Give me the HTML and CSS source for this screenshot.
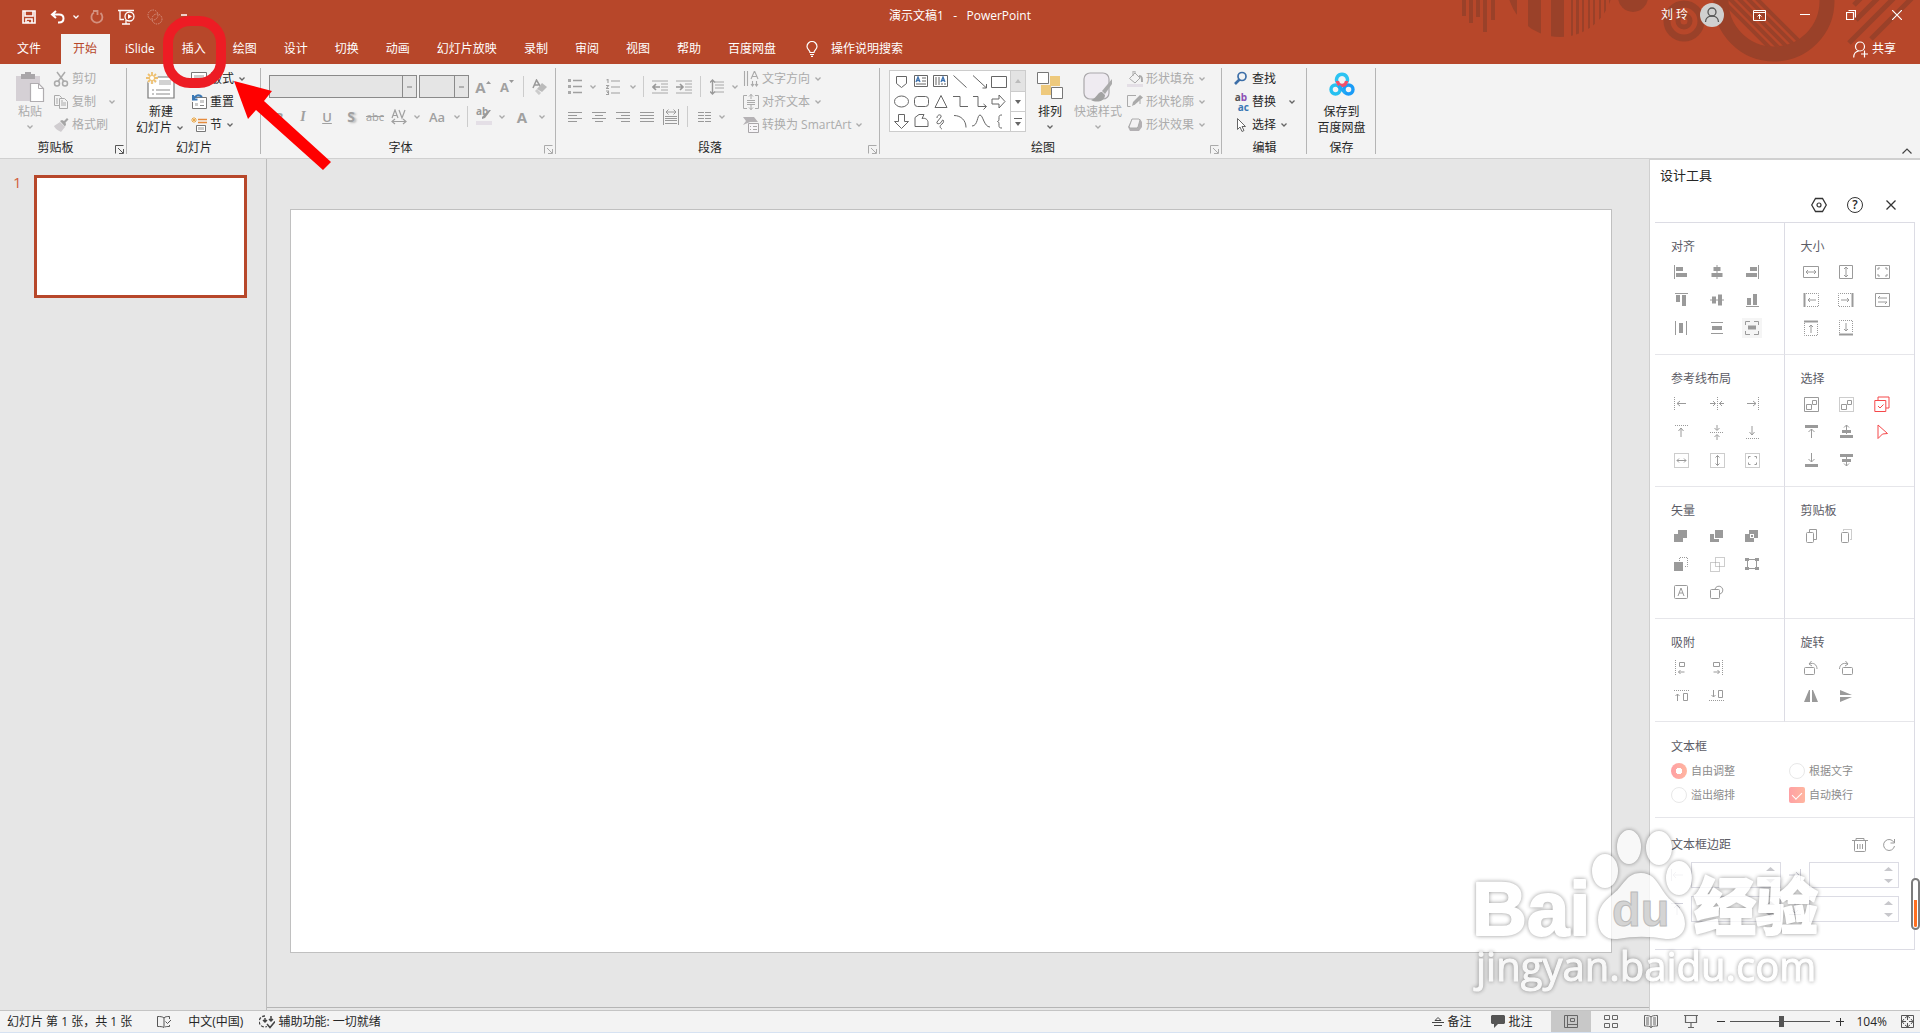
FILE: index.html
```html
<!DOCTYPE html>
<html lang="zh-CN">
<head>
<meta charset="utf-8">
<title>演示文稿1 - PowerPoint</title>
<link rel="stylesheet" href="styles.css">
</head>
<body>
<svg class="sprite" aria-hidden="true">
  <symbol id="chev" viewBox="0 0 8 8"><path d="M1.5 2.5 4 5l2.500-2.500" fill="none" stroke="currentColor" stroke-width="1.300"/></symbol>
  <symbol id="launch" viewBox="0 0 9 9"><path d="M.5 8.500V.5H8.500M3 3l5 5M8.500 4v4.500H4" fill="none" stroke="currentColor"/></symbol>
</svg>

<header class="header">
  <svg class="deco" viewBox="0 0 460 64" aria-hidden="true">
    <defs>
      <clipPath id="c1"><circle cx="100" cy="-16" r="53"/></clipPath>
      <clipPath id="c2"><circle cx="314" cy="1" r="46"/></clipPath>
    </defs>
    <g fill="#9a4129">
      <path d="M2 0h4v16H2zM9 0h4v23H9zM16 0h4v17h-4zM23 0h4v32h-4zM31 0h4v20h-4z"/>
      <path clip-path="url(#c1)" d="M45 0h12v40H45zM68 0h13v40H68zM91 0h13v40H91zM111 0h2v40h-2zM116 0h3v40h-3zM122 0h2v40h-2zM128 0h2v40h-2zM133 0h2v40h-2zM139 0h2v40h-2zM144 0h2v40h-2zM149 0h2v40h-2z"/>
      <circle cx="173" cy="-3" r="15"/>
    </g>
    <g fill="none" stroke="#9a4129">
      <circle cx="224" cy="21" r="17" stroke-width="7"/><circle cx="224" cy="21" r="6" stroke-width="5"/>
      <circle cx="314" cy="1" r="53" stroke-width="15"/>
      <path clip-path="url(#c2)" stroke-width="4" d="M288 -10l70 70M279 -10l70 70M270 -10l70 70M261 -10l70 70M252 -10l70 70"/>
      <path stroke-width="5" d="M394 5l10-10M396 20l25-25M389 43l48-48M411 39l44-44"/>
    </g>
  </svg>
  <div class="titlebar">
    <div class="quick">
      <button aria-label="保存"><svg width="14" height="14" viewBox="0 0 14 14"><path d="M1 1h12v12H1zM3 1v5h8V1M4 13V9h6v4M6 13v-2" fill="none" stroke="#fff" stroke-width="1.600"/></svg></button>
      <button aria-label="撤消"><svg width="16" height="14" viewBox="0 0 16 14"><path d="M6 1 2 4.500 6 8M2 4.500h7c3 0 4.500 1.800 4.500 4S12 12.500 9 12.500H8" fill="none" stroke="#fff" stroke-width="2"/></svg></button>
      <svg class="cv light" width="12" height="8"><use href="#chev"/></svg>
      <button aria-label="恢复" class="dim"><svg width="14" height="14" viewBox="0 0 14 14"><path d="M4 2.500A5.500 5.500 0 1 0 10.500 3M3 1h4.500v4" fill="none" stroke="#fff" stroke-width="1.800"/></svg></button>
      <button aria-label="从头开始" class="near"><svg width="18" height="16" viewBox="0 0 18 16"><path d="M0 1.500h16M2 2v8.500h4M4 15h8M8 11v4" fill="none" stroke="#fff" stroke-width="1.300"/><circle cx="11.500" cy="7.500" r="4.500" fill="#b7472a" stroke="#fff" stroke-width="1.300"/><path d="M10 5l4 2.500-4 2.500z" fill="#fff"/></svg></button>
      <button aria-label="iSlide" class="dim"><svg width="16" height="16" viewBox="0 0 16 16"><circle cx="6" cy="6" r="5" fill="none" stroke="#fff" stroke-dasharray="1.500 1"/><circle cx="10" cy="10" r="5" fill="none" stroke="#fff" stroke-dasharray="1.500 1"/></svg></button>
      <button aria-label="自定义"><svg width="6" height="6" viewBox="0 0 6 6"><path d="M0 1h6" stroke="#fff" stroke-width="1.500"/></svg></button>
    </div>
    <h1 class="doc-title">演示文稿1&nbsp;&nbsp; -&nbsp;&nbsp; PowerPoint</h1>
    <div class="account">
      <span>刘 玲</span>
      <svg class="avatar" width="24" height="24" viewBox="0 0 24 24"><circle cx="12" cy="12" r="12" fill="#d0d0d0"/><circle cx="12" cy="9" r="4" fill="none" stroke="#555" stroke-width="1.300"/><path d="M5.500 19c0-8 13-8 13 0" fill="none" stroke="#555" stroke-width="1.300"/></svg>
      <button class="win" aria-label="功能区显示选项"><svg width="13" height="11" viewBox="0 0 13 11"><path d="M.5.5h12v10H.5zM.5 2.500h12M6.500 9V4.500M4.500 6.500l2-2 2 2" fill="none" stroke="#fff"/></svg></button>
      <button class="win" aria-label="最小化"><svg width="10" height="10" viewBox="0 0 10 10"><path d="M0 4.500h10" stroke="#fff"/></svg></button>
      <button class="win" aria-label="还原"><svg width="10" height="10" viewBox="0 0 10 10"><path d="M.5 2.500h7v7h-7zM2.500.5h7v7" fill="none" stroke="#fff" stroke-width="1.200"/></svg></button>
      <button class="win" aria-label="关闭"><svg width="10" height="10" viewBox="0 0 10 10"><path d="M0 0l10 10M10 0 0 10" stroke="#fff" stroke-width="1.200"/></svg></button>
    </div>
  </div>
  <nav class="tabs">
    <a href="#" class="file">文件</a><a href="#" class="active">开始</a><a href="#">iSlide</a><a href="#">插入</a><a href="#">绘图</a><a href="#">设计</a><a href="#">切换</a><a href="#">动画</a><a href="#">幻灯片放映</a><a href="#">录制</a><a href="#">审阅</a><a href="#">视图</a><a href="#">帮助</a><a href="#">百度网盘</a>
    <button class="tell"><svg width="12" height="16" viewBox="0 0 12 16"><path d="M4 11.500C4 9 1 8.500 1 5.500a5 5 0 0 1 10 0c0 3-3 3.500-3 6zM4 13.500h4M5 15.300h2" fill="none" stroke="#fff" stroke-width="1.200"/></svg>操作说明搜索</button>
    <button class="share"><svg width="15" height="17" viewBox="0 0 15 17"><circle cx="7" cy="5.500" r="4.500" fill="none" stroke="#fff" stroke-width="1.200"/><path d="M.7 16.500c0-4 2-6 5-6.500M8 13h7M11.500 9.500v7" fill="none" stroke="#fff" stroke-width="1.200"/></svg>共享</button>
  </nav>
</header>

<section class="ribbon">
  <div class="group g-clip">
    <div class="body">
      <button class="big off"><svg width="30" height="30" viewBox="0 0 30 30"><path d="M1 4h24v25H1z" fill="#d5d0d5"/><path d="M6 2h4V0h6v2h4v5H6z" fill="#a9a6a9"/><path d="M15.500 11.500h8l5 5v13h-13z" fill="#fff" stroke="#b0adb0" stroke-width="1.200"/><path d="M23.500 11.500v5h5" fill="none" stroke="#b0adb0"/></svg><span>粘贴</span><svg class="cv" width="8" height="8"><use href="#chev"/></svg></button>
      <div class="small off">
        <button><svg width="16" height="16" viewBox="0 0 16 16"><g fill="none" stroke="#aaa" stroke-width="1.500"><circle cx="4" cy="12.500" r="2.500"/><circle cx="12" cy="12.500" r="2.500"/><path d="M4 1l7 9.500M12 1 5 10.500"/></g></svg>剪切</button>
        <button><svg width="16" height="16" viewBox="0 0 16 16"><g fill="#f3f3f3" stroke="#aaa"><path d="M1.500 1.500h5l2 2v8h-7z"/><path d="M6.500 4.500h5l3 3v7h-8z"/><path d="M3 5h2M3 7h2M3 9h2M8 9h5M8 11h5M8 7h2"/></g></svg>复制<svg class="cv far" width="12" height="8"><use href="#chev"/></svg></button>
        <button><svg width="16" height="16" viewBox="0 0 16 16"><path d="M1 9l6-4 5 5-4 5c-2-1-6-3-7-6z" fill="#d0cdd0"/><path d="M7 4l2-1 2 1 3-3 1.500 1.500-3 3 .5 2-1 2z" fill="#a5a5a5"/></svg>格式刷</button>
      </div>
    </div>
    <div class="cap"><span>剪贴板</span><svg class="launch dark" width="9" height="9"><use href="#launch"/></svg></div>
  </div>

  <div class="group g-slide">
    <div class="body">
      <button class="big"><svg width="30" height="30" viewBox="0 0 30 30"><path d="M2 5h26v21H2z" fill="#fff" stroke="#7a7a7a" stroke-width="1.200"/><path d="M13 8h12v5H13z" fill="#d2d2d2"/><path d="M6 18h2m2 0h14M6 22h2m2 0h14" stroke="#8a8a8a"/><circle cx="6" cy="6" r="6" fill="#f3f3f3"/><path d="M6 0v12M0 6h12M2 2l8 8M10 2l-8 8" stroke="#eec070" stroke-width="1.800"/><circle cx="6" cy="6" r="2" fill="#fff"/></svg><span>新建</span><span class="line">幻灯片<svg class="cv" width="12" height="8"><use href="#chev"/></svg></span></button>
      <div class="small">
        <button><svg width="16" height="16" viewBox="0 0 16 16"><path d="M.5 1.500h15v13H.5z" fill="#fff" stroke="#777"/><path d="M3 4h10v3H3zM3 9h4v3H3z" fill="#ccc"/><path d="M9 9.500h4M9 11.500h4" stroke="#888"/></svg>版式<svg class="cv" width="12" height="8"><use href="#chev"/></svg></button>
        <button><svg width="16" height="16" viewBox="0 0 16 16"><path d="M4 3.500h11.500v11H1.500V8" fill="#fff" stroke="#777"/><path d="M9 6h4v3H9zM4 9h3v3H4z" fill="#ccc"/><path d="M9 11.500h4" stroke="#888"/><path d="M2 1v4.500h4.500M2.500 5C4 1.500 8 0 11 3" fill="none" stroke="#3a78b5" stroke-width="2"/></svg>重置</button>
        <button><svg width="16" height="16" viewBox="0 0 16 16"><path d="M7 2.500h9M7 5.500h9" stroke="#e58a3c" stroke-width="1.500"/><path d="M5.500 8.500h9v6h-9z" fill="#fff" stroke="#777"/><path d="M7 10h6v3H7z" fill="#ccc"/><path d="M3 0v6M0 3h6M1 1l4 4M5 1 1 5" stroke="#eba94b"/></svg>节<svg class="cv" width="12" height="8"><use href="#chev"/></svg></button>
      </div>
    </div>
    <div class="cap"><span>幻灯片</span></div>
  </div>

  <div class="group g-font">
    <div class="body rows">
      <div class="row">
        <div class="combo wide"><input aria-label="字体" disabled><i></i></div><div class="combo"><input aria-label="字号" disabled><i></i></div>
        <button class="ic"><b class="glyph big-a">A</b><svg width="5" height="12" viewBox="0 0 5 12"><path d="M0 3l2.500-3L5 3z" fill="#999"/></svg></button>
        <button class="ic"><b class="glyph">A</b><svg width="5" height="14" viewBox="0 0 5 14"><path d="M0 0l2.500 3L5 0z" fill="#999"/></svg></button>
        <i class="sep"></i>
        <button class="ic" aria-label="清除格式"><svg width="16" height="16" viewBox="0 0 16 16"><path d="M1 9 4.500 1 8 7M2.500 6h4" fill="none" stroke="#999" stroke-width="1.500"/><path d="M10 4l5 4-5 5-5-3z" fill="#bbb"/><path d="M4 11l4 4" stroke="#ccc" stroke-width="3"/></svg></button>
      </div>
      <div class="row">
        <button class="ic glyph"><b>B</b></button><button class="ic glyph serif"><i>I</i></button><button class="ic glyph under"><u>U</u></button><button class="ic glyph shadow">S</button><button class="ic glyph strike">abc</button>
        <button class="ic" aria-label="字符间距"><svg width="16" height="16" viewBox="0 0 16 16"><path d="M1 9l3-8 3 8M2 6.500h4M8 1l3 8 3-8M1 12.500h14M4 10l-3 2.500L4 15M12 10l3 2.500-3 2.500" fill="none" stroke="#a0a0a0" stroke-width="1.200"/></svg></button><svg class="cv" width="12" height="8"><use href="#chev"/></svg>
        <button class="ic mid glyph light-a">Aa</button><svg class="cv" width="12" height="8"><use href="#chev"/></svg>
        <i class="sep"></i>
        <button class="ic hl"><span>ab</span><svg width="16" height="16" viewBox="0 0 16 16"><path d="M15 1l-6 8-3 1v-2l7-7z" fill="#999"/><path d="M0 12h16v4H0z" fill="#e4dfe6"/></svg></button><svg class="cv" width="12" height="8"><use href="#chev"/></svg>
        <button class="ic glyph mid big-a"><b>A</b></button><svg class="cv" width="12" height="8"><use href="#chev"/></svg>
      </div>
    </div>
    <div class="cap"><span>字体</span><svg class="launch" width="9" height="9"><use href="#launch"/></svg></div>
  </div>

  <div class="group g-para">
    <div class="body">
      <div class="rows">
        <div class="row">
          <button class="ic" aria-label="项目符号"><svg width="14" height="15" viewBox="0 0 14 15"><path d="M5 1.500h9M5 7.500h9M5 13.500h9" stroke="#a0a0a0" stroke-width="1.300"/><path d="M0 0h3v3H0zM0 6h3v3H0zM0 12h3v3H0z" fill="#aaa"/></svg></button><svg class="cv" width="12" height="8"><use href="#chev"/></svg>
          <button class="ic mid" aria-label="编号"><svg width="14" height="16" viewBox="0 0 14 16"><path d="M5 2h9M5 8h9M5 14h9M.5 1 2 .5V4M0 6.500h2.500L.5 9.500H3M0 12h2.500v1.500H1h1.500V15.500H0" fill="none" stroke="#a0a0a0" stroke-width="1.100"/></svg></button><svg class="cv" width="12" height="8"><use href="#chev"/></svg>
          <i class="sep"></i>
          <button class="ic" aria-label="降低列表级别"><svg width="16" height="14" viewBox="0 0 16 14"><path d="M0 1h16M9 4h7M9 7h7M9 10h7M0 13h16" stroke="#a8a8a8"/><path d="M1 7h7M4 4 1 7l3 3" fill="none" stroke="#999" stroke-width="1.600"/></svg></button>
          <button class="ic" aria-label="提高列表级别"><svg width="16" height="14" viewBox="0 0 16 14"><path d="M0 1h16M9 4h7M9 7h7M9 10h7M0 13h16" stroke="#a8a8a8"/><path d="M0 7h7M4 4l3 3-3 3" fill="none" stroke="#999" stroke-width="1.600"/></svg></button>
          <i class="sep"></i>
          <button class="ic" aria-label="行距"><svg width="14" height="16" viewBox="0 0 14 16"><path d="M5 3h9M5 6h9M5 9h9M5 13h9" stroke="#a8a8a8"/><path d="M2.500 1v14M0 3.500 2.500 1 5 3.500M0 12.500 2.500 15 5 12.500" fill="none" stroke="#999" stroke-width="1.400"/></svg></button><svg class="cv" width="12" height="8"><use href="#chev"/></svg>
        </div>
        <div class="row">
          <button class="ic" aria-label="左对齐"><svg width="14" height="12" viewBox="0 0 14 12"><path d="M0 1.500h14M0 4.500h9M0 7.500h14M0 10.500h9" stroke="#999"/></svg></button>
          <button class="ic" aria-label="居中"><svg width="14" height="12" viewBox="0 0 14 12"><path d="M0 1.500h14M3 4.500h8M0 7.500h14M3 10.500h8" stroke="#999"/></svg></button>
          <button class="ic" aria-label="右对齐"><svg width="14" height="12" viewBox="0 0 14 12"><path d="M0 1.500h14M5 4.500h9M0 7.500h14M5 10.500h9" stroke="#999"/></svg></button>
          <button class="ic" aria-label="两端对齐"><svg width="14" height="12" viewBox="0 0 14 12"><path d="M0 1.500h14M0 4.500h14M0 7.500h14M0 10.500h14" stroke="#999"/></svg></button>
          <button class="ic" aria-label="分散对齐"><svg width="16" height="16" viewBox="0 0 16 16"><path d="M.5 0v16M15.500 0v16M2 7.500h12M2 9.500h12M2 11.500h12M2 14.500h12M3 3h10M5.500.500 3 3l2.500 2.500M10.500.5 13 3l-2.500 2.500" fill="none" stroke="#999"/></svg></button>
          <i class="sep"></i>
          <button class="ic" aria-label="分栏"><svg width="13" height="12" viewBox="0 0 13 12"><path d="M0 1.500h6m1 0h6M0 4.500h6m1 0h6M0 7.500h6m1 0h6M0 10.500h6m1 0h6" stroke="#999"/></svg></button><svg class="cv" width="12" height="8"><use href="#chev"/></svg>
        </div>
      </div>
      <div class="small off">
        <button><svg width="16" height="16" viewBox="0 0 16 16"><path d="M1.500 0v15M4.500 0v15M9.500 10v5M13.500 10v5M8 13l1.500 2 1.500-2M12 13l1.500 2 1.500-2M8 8l3.500-8L15 8M9 5.500h5" fill="none" stroke="#aaa" stroke-width="1.100"/></svg>文字方向<svg class="cv" width="12" height="8"><use href="#chev"/></svg></button>
        <button><svg width="16" height="16" viewBox="0 0 16 16"><path d="M4 1.500H.5v13H4M12 1.500h3.500v13H12M4 6.500h8M4 8.500h8M8 0v5M6 2.500 8 .5l2 2M8 11v5M6 13.500l2 2 2-2M4 10.500h8" fill="none" stroke="#aaa"/></svg>对齐文本<svg class="cv" width="12" height="8"><use href="#chev"/></svg></button>
        <button><svg width="16" height="16" viewBox="0 0 16 16"><path d="M0 0h11l4 5H7L0 8l3-4z" fill="#b5b2b5"/><path d="M5.500 6.500h10v9h-10z" fill="#f7f5f8" stroke="#a9a6a9"/><path d="M7 9.500h1m2 0h4M7 12.500h1m2 0h4" stroke="#aaa"/></svg>转换为 SmartArt<svg class="cv" width="12" height="8"><use href="#chev"/></svg></button>
      </div>
    </div>
    <div class="cap"><span>段落</span><svg class="launch" width="9" height="9"><use href="#launch"/></svg></div>
  </div>

  <div class="group g-draw">
    <div class="body">
      <div class="gallery">
        <svg class="shapes" width="120" height="60" viewBox="0 0 118 60" fill="none" stroke="#666">
          <path d="M5.500 5.500h10v7l-5 4-5-4z"/>
          <path d="M23.500 4.500h13v11h-13zM42.500 4.500h14v11h-14zM31 7h4M31 10h4M25 13h10M45 6v8M48 6v8M51 12v2M54 12v2"/><path d="M25 11l2-5 2 5M26 9.500h2M50 11l2-5 2 5M51 9.500h2" stroke="#3f73b0" stroke-width="1.300"/>
          <path d="M62.500 4.500 75.500 16.500M82 4.500l13 12M95.500 13v4h-4M100.500 5.500h15v11h-15z"/>
          <ellipse cx="10.500" cy="30.500" rx="7" ry="5.500"/><rect x="23.500" y="25.500" width="14" height="10" rx="3"/><path d="M50 24.500 56 36.500H44zM62 25.500h7v10h8M82 25.500h5v10h8M92.500 33l3 2.500-3 3M101 28h7v-4l6 6.500-6 6.500v-4h-7z"/>
          <path d="M7.500 43.500h6v7h4l-7 7-7-7h4zM24 55.500v-9l4-3h5l-2 4c3-1 6 1 6 4v4zM46 47c0-4 5-4 4-1l-4 5c-1 3 4 2 5-1s3 1 0 3-2 4 0 5M63 44.500c7 0 12 5 12 12M81 55c6 0 5-11 8-11s4 12 10 12M111 44c-3 0-3 1-3 3s0 3-1.500 3.500c1.500.500 1.500 1.500 1.500 3.500s0 3 3 3"/>
        </svg>
        <div class="gscroll"><button class="dis" aria-label="上一行"><svg width="6" height="4"><path d="M0 4l3-4 3 4z" fill="#bbb"/></svg></button><button aria-label="下一行"><svg width="6" height="4"><path d="M0 0l3 4 3-4z" fill="#666"/></svg></button><button aria-label="其他"><svg width="8" height="8"><path d="M0 .5h8" stroke="#666"/><path d="M1 4l3 4 3-4z" fill="#666"/></svg></button></div>
      </div>
      <button class="big w40"><svg width="26" height="30" viewBox="0 0 26 30"><path d="M13 4h10v10H13zM4 13h10v10H4z" fill="#eec97c"/><path d="M.5.5h11v11H.5zM14.500 15.500h11v11h-11z" fill="#fff" stroke="#777"/></svg><span>排列</span><svg class="cv" width="8" height="8"><use href="#chev"/></svg></button>
      <button class="big w50 off"><svg width="30" height="30" viewBox="0 0 30 30"><rect x="1" y="1" width="25" height="26" rx="6" fill="#efebf1" stroke="#aaa8ab" stroke-width="1.200"/><path d="M29 7 19 19l3 3 7-10z" fill="#aaa"/><path d="M19 20c-4-1-4 5-11 8 5 3 14 2 14-5z" fill="#a3a3a3"/></svg><span>快速样式</span><svg class="cv" width="8" height="8"><use href="#chev"/></svg></button>
      <div class="small off">
        <button><svg width="16" height="16" viewBox="0 0 16 16"><path d="M0 13h16v3H0z" fill="#e4dfe6"/><path d="M2.500 7.500 8 2l5 5-5 5zM6 5V0h2v3" fill="#f3f3f3" stroke="#aaa"/><path d="M12 5c3 0 3 2 3 6" fill="none" stroke="#aaa" stroke-width="2"/></svg>形状填充<svg class="cv" width="12" height="8"><use href="#chev"/></svg></button>
        <button><svg width="16" height="16" viewBox="0 0 16 16"><path d="M9 1.500H.5v11h3M13 6v4" fill="none" stroke="#aaa"/><path d="M5 12l1-4 7-7 3 2.500-8 7z" fill="#aaa"/></svg>形状轮廓<svg class="cv" width="12" height="8"><use href="#chev"/></svg></button>
        <button><svg width="16" height="16" viewBox="0 0 16 16"><path d="M1 10l4-8h8l2 3v5l-3 4H3z" fill="#b3b0b3"/><path d="M5 2h7l1 1-2 7-1 1H3l-1-1z" fill="#f4f2f4" stroke="#aaa"/></svg>形状效果<svg class="cv" width="12" height="8"><use href="#chev"/></svg></button>
      </div>
    </div>
    <div class="cap"><span>绘图</span><svg class="launch" width="9" height="9"><use href="#launch"/></svg></div>
  </div>

  <div class="group g-edit">
    <div class="body">
      <div class="small">
        <button><svg width="16" height="16" viewBox="0 0 16 16"><circle cx="9" cy="5.500" r="4" fill="none" stroke="#3d6fa8" stroke-width="1.700"/><path d="M6.500 8.500 2 13" stroke="#3d6fa8" stroke-width="2.600"/></svg>查找</button>
        <button><span class="abac"><span>a<em>b</em></span><span class="to">ac</span></span>替换<svg class="cv far" width="12" height="8"><use href="#chev"/></svg></button>
        <button><svg width="16" height="16" viewBox="0 0 16 16"><path d="M4.500 1.500v11L7 10l2 4.500 2-1L9 9.500h3.500z" fill="#fff" stroke="#666"/></svg>选择<svg class="cv" width="12" height="8"><use href="#chev"/></svg></button>
      </div>
    </div>
    <div class="cap"><span>编辑</span></div>
  </div>

  <div class="group g-save">
    <div class="body">
      <button class="big"><svg width="26" height="30" viewBox="0 0 26 30"><g fill="none" stroke-width="3.400"><path d="M8 10a5.500 5.500 0 1 1 10 0" stroke="#2cc3f2"/><circle cx="6.500" cy="17.500" r="4.500" stroke="#25c0f0"/><circle cx="19.500" cy="17.500" r="4.500" stroke="#1a9cf7"/><path d="M8.500 9a4.500 4.500 0 1 0 9 0" stroke="#f0506a"/><path d="M9.500 14l7 7" stroke="#1fa9f5"/></g></svg><span>保存到</span><span>百度网盘</span></button>
    </div>
    <div class="cap"><span>保存</span></div>
  </div>
  <button class="collapse" aria-label="折叠功能区"><svg width="10" height="6" viewBox="0 0 10 6"><path d="M.5 5.500 5 1l4.500 4.500" fill="none" stroke="#444" stroke-width="1.200"/></svg></button>
</section>

<main class="work">
  <aside class="thumbs"><span class="num">1</span><div class="thumb"></div></aside>
  <section class="canvas"><div class="slide"></div></section>
  <aside class="pane">
    <h2>设计工具</h2>
    <div class="pane-tools">
      <button aria-label="设置"><svg width="16" height="16" viewBox="0 0 16 16"><path d="M4.500 1.500h7L15.300 8l-3.800 6.500h-7L.7 8z" fill="none" stroke="#333" stroke-width="1.300"/><circle cx="8" cy="8" r="2" fill="none" stroke="#333" stroke-width="1.200"/></svg></button>
      <button aria-label="帮助" class="help"><span>?</span></button>
      <button aria-label="关闭"><svg width="10" height="10" viewBox="0 0 10 10"><path d="M.5.5l9 9M9.500.5l-9 9" stroke="#333" stroke-width="1.300"/></svg></button>
    </div>
    <div class="box">
      <section class="cell"><h3>对齐</h3><div class="icons">
        <svg viewBox="0 0 16 16"><path d="M1.500 1v14" class="s"/><path class="f" d="M3 3h7v4H3zM3 9h11v4H3z"/></svg>
        <svg viewBox="0 0 16 16"><path d="M8 1v14" class="s"/><path class="f" d="M4.500 3h7v4h-7zM2.500 9h11v4h-11z"/></svg>
        <svg viewBox="0 0 16 16"><path d="M14.500 1v14" class="s"/><path class="f" d="M6 3h7v4H6zM2 9h11v4H2z"/></svg>
        <svg viewBox="0 0 16 16"><path d="M2 1.500h13" class="s"/><path class="f" d="M3 3h4v7H3zM9 3h4v11H9z"/></svg>
        <svg viewBox="0 0 16 16"><path d="M1 8h14" class="s"/><path class="f" d="M3 4.500h4v7H3zM9 2.500h4v11H9z"/></svg>
        <svg viewBox="0 0 16 16"><path d="M2 14.500h13" class="s"/><path class="f" d="M3 6h4v7H3zM9 2h4v11H9z"/></svg>
        <svg viewBox="0 0 16 16"><path d="M2.500 1v14M13.500 1v14" class="s"/><path class="f" d="M6 3h4v10H6z"/></svg>
        <svg viewBox="0 0 16 16"><path d="M2 2.500h12M2 13.500h12" class="s"/><path class="f" d="M3 6h10v4H3z"/></svg>
        <svg viewBox="0 0 16 16" class="hover"><path d="M1.500 5V1.500H6M10 1.500h4.500V5M14.500 11v3.500H10M6 14.500H1.500V11" class="s"/><path class="f" d="M4 5.500h8v4H4z"/></svg>
      </div></section>
      <section class="cell"><h3>大小</h3><div class="icons">
        <svg viewBox="0 0 16 16"><path class="s" d="M.5 2.500h15v11H.5zM3 8h10M5 6 3 8l2 2M11 6l2 2-2 2"/></svg>
        <svg viewBox="0 0 16 16"><path class="s" d="M1.500 1.500h13v13h-13zM8 3v10M6 5l2-2 2 2M6 11l2 2 2-2"/></svg>
        <svg viewBox="0 0 16 16"><path class="s" d="M1.500 1.500h14v13h-14zM4 6V4h2M11 4h2v2M13 10v2h-2M6 12H4v-2"/></svg>
        <svg viewBox="0 0 16 16"><path class="d" d="M3 1.500h12.500v13H3"/><path class="s2" d="M1.500 1v14"/><path class="s" d="M5 8h8M7 6 5 8l2 2"/></svg>
        <svg viewBox="0 0 16 16"><path class="d" d="M13 1.500H.5v13H13"/><path class="s2" d="M14.500 1v14"/><path class="s" d="M3 8h8M9 6l2 2-2 2"/></svg>
        <svg viewBox="0 0 16 16"><path class="s" d="M1.500 1.500h14v13h-14zM4 6h9M6 4 4 6M4 10h9M11 12l2-2"/></svg>
        <svg viewBox="0 0 16 16"><path class="d" d="M1.500 3v12.500h13V3"/><path class="s2" d="M1 1.500h14"/><path class="s" d="M8 13V5M6 7l2-2 2 2"/></svg>
        <svg viewBox="0 0 16 16"><path class="d" d="M1.500 13V.5h13V13"/><path class="s2" d="M1 14.500h14"/><path class="s" d="M8 3v8M6 9l2 2 2-2"/></svg>
      </div></section>
      <section class="cell"><h3>参考线布局</h3><div class="icons">
        <svg viewBox="0 0 16 16"><path class="d" d="M1.500 1v14"/><path class="s" d="M4 7.500h9M7 5 4 7.500 7 10"/></svg>
        <svg viewBox="0 0 16 16"><path class="d" d="M8.500 1v14"/><path class="s" d="M1 7.500h5M4 5l2.500 2.500L4 10M15 7.500h-5M13 5l-2.500 2.500L13 10"/></svg>
        <svg viewBox="0 0 16 16"><path class="d" d="M14.500 1v14"/><path class="s" d="M3 7.500h9M9 5l3 2.500L9 10"/></svg>
        <svg viewBox="0 0 16 16"><path class="d" d="M2 1.500h13"/><path class="s" d="M8 13V4M5.500 7 8 4l2.500 3"/></svg>
        <svg viewBox="0 0 16 16"><path class="d" d="M1 8.500h14"/><path class="s" d="M8 1v5M5.500 4 8 6.500 10.500 4M8 16v-5M5.500 13 8 10.500l2.500 2.500"/></svg>
        <svg viewBox="0 0 16 16"><path class="d" d="M2 14.500h13"/><path class="s" d="M8 2v9M5.500 8 8 11l2.500-3"/></svg>
        <svg viewBox="0 0 16 16"><path class="d" d="M1.500 1.500h14v14h-14z"/><path class="s" d="M4 8.500h9M6 6.500l-2 2 2 2M11 6.500l2 2-2 2"/></svg>
        <svg viewBox="0 0 16 16"><path class="d" d="M1.500 1.500h14v14h-14z"/><path class="s" d="M8.500 3.500v10M6.500 5.500l2-2 2 2M6.500 11.500l2 2 2-2"/></svg>
        <svg viewBox="0 0 16 16"><path class="d" d="M1.500 1.500h14v14h-14z"/><path class="s" d="M4.500 6.500v-2h2M10.500 4.500h2v2M12.500 10.500v2h-2M6.500 12.500h-2v-2"/></svg>
      </div></section>
      <section class="cell"><h3>选择</h3><div class="icons">
        <svg viewBox="0 0 16 16"><path class="s" d="M1.500 1.500h14v14h-14zM3.500 8.500h5v5h-5zM9.500 4.500h4v4h-4z"/></svg>
        <svg viewBox="0 0 16 16"><path class="d" d="M1.500 1.500h14v14h-14z"/><path class="s" d="M3.500 8.500h5v5h-5zM9.500 4.500h4v4h-4z"/></svg>
        <svg viewBox="0 0 16 16" class="red"><path class="s" d="M.8 4.500h11v11h-11zM4 4V1h11v11h-3M4 10l2 2 3.500-3.500" stroke-width="1.300"/></svg>
        <svg viewBox="0 0 16 16"><path class="f" d="M2 1h13v3H2z"/><path class="s" d="M8.500 14V5M5.500 8l3-3 3 3"/></svg>
        <svg viewBox="0 0 16 16"><path class="f" d="M4 6h9v3H4zM2 11h13v3H2z"/><path class="s" d="M8.500 10V1M6 3.500 8.500 1 11 3.500"/></svg>
        <svg viewBox="0 0 16 16" class="red"><path class="s" d="M4 1l9.500 8.500-5 .5L4 14.500z"/></svg>
        <svg viewBox="0 0 16 16"><path class="f" d="M2 12h13v3H2z"/><path class="s" d="M8.500 1v9M5.500 7l3 3 3-3"/></svg>
        <svg viewBox="0 0 16 16"><path class="f" d="M2 2h13v3H2zM4 7h9v3H4z"/><path class="s" d="M8.500 4v10M6 11.500 8.500 14l2.500-2.500"/></svg>
      </div></section>
      <section class="cell"><h3>矢量</h3><div class="icons">
        <svg viewBox="0 0 16 16"><path class="f" d="M5 2h9v8h-4v4H1V6h4z"/></svg>
        <svg viewBox="0 0 16 16"><path class="f" d="M6 2h8v8H6zM1 6h4v5h5v3H1z"/></svg>
        <svg viewBox="0 0 16 16"><path class="f" fill-rule="evenodd" d="M5 2h9v8h-4v4H1V6h4zM6 6v4h4V6z"/><path class="f" d="M7 7h2v2H7z"/></svg>
        <svg viewBox="0 0 16 16"><path class="f" d="M1 6h9v9H1z"/><path class="d" d="M6.500 5V1.500h8v9H11"/></svg>
        <svg viewBox="0 0 16 16"><path class="d" d="M1.500 6.500h9v9h-9zM6.500 1.500h9v9h-9z"/></svg>
        <svg viewBox="0 0 16 16"><path class="s" d="M3.500 3.500h9v9h-9z"/><path class="f" d="M1 2h4v3H1zM11 2h4v3h-4zM1 11h4v3H1zM11 11h4v3h-4z"/></svg>
        <svg viewBox="0 0 16 16"><rect class="s" x="1.500" y="1.500" width="13" height="13" rx="1"/><path class="s" d="M5 12l3-8 3 8M6 9h4"/></svg>
        <svg viewBox="0 0 16 16"><rect class="s" x="1.500" y="5.500" width="9" height="9" rx="1"/><path class="s" d="M6 5a4 4 0 1 1 5 5"/></svg>
      </div></section>
      <section class="cell"><h3>剪贴板</h3><div class="icons">
        <svg viewBox="0 0 16 16"><rect class="s" x="3.500" y="4.500" width="7" height="10" rx="1"/><path class="s" d="M6.500 4V1.500h7v10H11"/></svg>
        <svg viewBox="0 0 16 16"><rect class="s" x="3.500" y="4.500" width="7" height="10" rx="1"/><path class="d" d="M5.500 2.500v-1h8v10H12"/></svg>
      </div></section>
      <section class="cell short"><h3>吸附</h3><div class="icons">
        <svg viewBox="0 0 16 16"><path class="d" d="M2.500 0v16"/><path class="s" d="M6.500 2.500h5v4h-5zM5.500 12h6M7.500 10l-2 2 2 2"/></svg>
        <svg viewBox="0 0 16 16"><path class="d" d="M13.500 0v16"/><path class="s" d="M4.500 2.500h6v4h-6zM4.500 12h6M8.500 10l2 2-2 2"/></svg>
        <i></i>
        <svg viewBox="0 0 16 16"><path class="d" d="M1 2.500h15"/><path class="s" d="M10.500 5.500h4v7h-4zM4.500 13V6M2.500 8l2-2 2 2"/></svg>
        <svg viewBox="0 0 16 16"><path class="d" d="M0 12.500h16"/><path class="s" d="M9.500 2.500h4v7h-4zM4.500 2v7M2.500 7l2 2 2-2"/></svg>
      </div></section>
      <section class="cell short"><h3>旋转</h3><div class="icons">
        <svg viewBox="0 0 16 16"><rect class="s" x="1.500" y="7.500" width="10" height="7" rx="1"/><path class="s" d="M6 4c5-2 8 1 8 5M8.500 1 6 4l3 2"/></svg>
        <svg viewBox="0 0 16 16"><rect class="s" x="4.500" y="7.500" width="10" height="7" rx="1"/><path class="s" d="M10 4C5 2 1.500 5 1.500 9M7.500 1 10 4 7 6"/></svg>
        <i></i>
        <svg viewBox="0 0 16 16"><path class="f" d="M6 2h1v12H1zM9 2h1l5 12H9z"/></svg>
        <svg viewBox="0 0 16 16"><path class="f" d="M2 2l12 5H2zM2 9h12L2 14z"/></svg>
      </div></section>
      <section class="wide-cell"><h3>文本框</h3><div class="opts">
        <label><input type="radio" name="fit" checked disabled>自由调整</label><label><input type="radio" name="fit" disabled>根据文字</label>
        <label><input type="radio" name="fit" disabled>溢出缩排</label><label><input type="checkbox" checked disabled>自动换行</label>
      </div></section>
      <section class="wide-cell last"><div class="mhead"><h3>文本框边距</h3>
        <button aria-label="删除"><svg width="16" height="16" viewBox="0 0 16 16"><path class="s" d="M0 3.500h16M4 3V1.500h8V3M2.500 4v9.500a1 1 0 0 0 1 1h9a1 1 0 0 0 1-1V4M5.500 7v5M8 7v5M10.500 7v5"/></svg></button>
        <button aria-label="重置"><svg width="14" height="14" viewBox="0 0 14 14"><path class="s" d="M12 4.500A5.500 5.500 0 1 0 12.500 8M12.500 1v4h-4"/></svg></button></div>
        <div class="margins">
          <svg width="12" height="14" viewBox="0 0 12 14"><path d="M.5 1v12M2 7h10M5 4 2 7l3 3"/></svg><div class="spin"><input aria-label="左边距" disabled><svg width="9" height="16" viewBox="0 0 9 16"><path d="M0 4l4.500-4L9 4zM0 12l4.500 4L9 12z"/></svg></div>
          <svg width="12" height="14" viewBox="0 0 12 14"><path d="M11.500 1v12M0 7h10M7 4l3 3-3 3"/></svg><div class="spin"><input aria-label="右边距" disabled><svg width="9" height="16" viewBox="0 0 9 16"><path d="M0 4l4.500-4L9 4zM0 12l4.500 4L9 12z"/></svg></div>
          <svg width="12" height="14" viewBox="0 0 12 14"><path d="M0 1.500h12M6 3v10M3 6l3-3 3 3"/></svg><div class="spin"><input aria-label="上边距" disabled><svg width="9" height="16" viewBox="0 0 9 16"><path d="M0 4l4.500-4L9 4zM0 12l4.500 4L9 12z"/></svg></div>
          <svg width="12" height="14" viewBox="0 0 12 14"><path d="M0 12.500h12M6 1v10M3 8l3 3 3-3"/></svg><div class="spin"><input aria-label="下边距" disabled><svg width="9" height="16" viewBox="0 0 9 16"><path d="M0 4l4.500-4L9 4zM0 12l4.500 4L9 12z"/></svg></div>
        </div>
      </section>
    </div>
    <div class="pill"><i></i></div>
  </aside>
</main>

<footer class="status">
  <span>幻灯片 第 1 张，共 1 张</span>
  <button class="proof" aria-label="拼写检查"><svg width="14" height="12" viewBox="0 0 14 12"><path d="M7 2v9.500M7 2C5.500.5 3 .5.5.5v10C3 10.500 5.500 10.500 7 11.500M7 2c1-1.500 3-1.500 5.500-1.500V3M8 11c1-.5 2-.5 4.500-.5V9M8.500 5.500l2 2L14 4" fill="none" stroke="#555"/></svg></button>
  <button>中文(中国)</button>
  <button class="acc"><svg width="16" height="14" viewBox="0 0 16 14"><path d="M6 1a5.500 5.500 0 1 0 2 10.500" fill="none" stroke="#444" stroke-width="1.300" stroke-dasharray="3 1.500"/><path d="M6 3v4M4 5l2 2 2-2M12 1v5M10 4l2 2 2-2M8 9l3 3.500 5-6" fill="none" stroke="#444" stroke-width="1.500"/></svg>辅助功能: 一切就绪</button>
  <div class="right">
    <button><svg width="12" height="10" viewBox="0 0 12 10"><path d="M0 5.500h12M2 8.500h8M3 3.500l3-3 3 3z" fill="none" stroke="#444"/></svg>备注</button>
    <button class="cmt"><svg width="14" height="13" viewBox="0 0 14 13"><path d="M1 0h12l1 1v7l-1 1H7l-4 4V9H1L0 8V1z" fill="#555"/></svg>批注</button>
    <button class="view on" aria-label="普通视图"><svg width="14" height="13" viewBox="0 0 14 13"><path d="M.5.5h13v12H.5zM3.500.5v12M3.500 9.500h10M6.500 3.500h4v3h-4z" fill="none" stroke="#666"/></svg></button>
    <button class="view" aria-label="幻灯片浏览"><svg width="14" height="13" viewBox="0 0 14 13"><path d="M.5.5h5v4h-5zM8.500.5h5v4h-5zM.5 8.500h5v4h-5zM8.500 8.500h5v4h-5z" fill="none" stroke="#666"/></svg></button>
    <button class="view" aria-label="阅读视图"><svg width="14" height="13" viewBox="0 0 14 13"><path d="M7 2v11M.5.5C3 .5 6 .5 7 2c1-1.500 4-1.500 6.500-1.500v10.500C11 11 8 11 7 12.500 6 11 3 11 .5 11zM2 3h3M2 5h3M2 7h3M2 9h3M9 3h3M9 5h3M9 7h3M9 9h3" fill="none" stroke="#666"/></svg></button>
    <button class="view" aria-label="幻灯片放映"><svg width="14" height="13" viewBox="0 0 14 13"><path d="M0 .5h14M1.500 1v6.500h11V1M7 8v4M4 12.500h6" fill="none" stroke="#666" stroke-width="1.200"/></svg></button>
    <button class="zm" aria-label="缩小"><svg width="8" height="8"><path d="M0 3.500h8" stroke="#333"/></svg></button>
    <input type="range" aria-label="缩放" min="0" max="100" value="51">
    <button class="zm" aria-label="放大"><svg width="8" height="8" viewBox="0 0 8 8"><path d="M0 3.500h8M4.500 0v8" stroke="#333"/></svg></button>
    <span class="pct">104%</span>
    <button class="fit" aria-label="适应窗口"><svg width="13" height="13" viewBox="0 0 13 13"><path d="M.5.5h12v12H.5zM6.500 1v4M6.500 8v4M1 6.500h4M8 6.500h4M4 3l2.500-2L9 3M4 10l2.500 2L9 10M3 4 1 6.500 3 9M10 4l2 2.500L10 9" fill="none" stroke="#555"/></svg></button>
  </div>
</footer>

<svg class="mark" width="240" height="190" viewBox="0 0 240 190" aria-hidden="true">
  <rect x="8" y="11" width="53" height="62" rx="22" fill="none" stroke="#ed1c24" stroke-width="10"/>
  <path d="M74 71l38 10-8 10 67 61-8 8-67-60-8 9z" fill="#f00"/>
</svg>

<svg class="watermark" width="360" height="180" viewBox="0 0 360 180" aria-hidden="true">
  <g class="wm">
    <text x="5" y="115" class="bai">Bai</text>
    <ellipse cx="138" cy="51" rx="12" ry="16"/><ellipse cx="162" cy="27" rx="11" ry="16"/><ellipse cx="192" cy="28" rx="12" ry="16"/><ellipse cx="212" cy="58" rx="12" ry="16"/>
    <path d="M174 54c15 0 17 15 27 25 10 8 16 15 16 25 0 9-8 15-18 14-16-3-33-3-49 0-11 1-18-6-18-18 0-17 12-22 19-29 8-9 11-17 23-17z"/>
    <text x="227" y="110" class="jy">经验</text>
    <text x="9" y="161" class="url">jingyan.baidu.com</text>
  </g>
  <text x="145" y="106" class="du">du</text>
</svg>
</body>
</html>
```
FILE: styles.css
```css
* { box-sizing: border-box; }
body { margin: 0; min-height: 100vh; display: flex; flex-direction: column; position: relative; overflow-x: hidden; background: #e6e6e6; color: #262626; font: 12px/16px "Open Sans", "Noto Sans CJK SC", sans-serif; }
button { font: inherit; color: inherit; background: none; border: 0; padding: 0; display: flex; align-items: center; justify-content: center; white-space: nowrap; }
h1, h2, h3 { margin: 0; font-weight: 400; }
a { color: inherit; text-decoration: none; }
svg { flex: none; display: block; }
.sprite { position: absolute; width: 0; height: 0; }
.cv { color: #666; }
.cv.light { color: #fff; }

/* title bar and tabs */
.header { position: relative; background: #b7472a; color: #fff; }
.deco { position: absolute; right: 0; top: 0; width: 460px; height: 64px; }
.titlebar { position: relative; display: grid; grid-template-columns: 1fr auto 1fr; align-items: center; height: 34px; }
.quick { display: flex; align-items: center; padding-left: 22px; }
.quick button { margin-right: 14px; }
.quick button:nth-child(2) { margin-right: 4px; }
.quick .cv { margin-right: 8px; }
.quick .near { margin-right: 11px; }
.quick .dim { opacity: .4; }
.quick button:last-child { margin-left: 4px; }
.doc-title { font-size: 12px; white-space: nowrap; padding-bottom: 2px; }
.account { display: flex; align-items: center; justify-content: flex-end; height: 34px; padding-bottom: 4px; }
.avatar { margin: 0 12px; }
.win { width: 46px; height: 30px; }
.tabs { position: relative; display: flex; gap: 3px; height: 30px; padding-left: 5px; }
.tabs a { padding: 0 12px; line-height: 30px; white-space: nowrap; }
.tabs .file { margin-right: 5px; }
.tabs .active { background: #f3f3f3; color: #b7472a; padding-right: 13px; }
.tell { gap: 13px; margin-left: 15px; }
.share { gap: 4px; margin: 0 24px 0 auto; }

/* ribbon */
.ribbon { display: flex; background: #f3f3f3; padding-top: 3px; border-bottom: 1px solid #d0d0d0; height: 95px; }
.group { position: relative; flex: none; display: flex; flex-direction: column; }
.group::after { content: ""; position: absolute; right: 0; top: 1px; bottom: 4px; width: 1px; background: #b5b5b5; }
.g-clip { width: 127px; }
.g-slide { width: 134px; }
.g-font { width: 295px; }
.g-para { width: 324px; }
.g-draw { width: 342px; }
.g-edit { width: 85px; }
.g-save { width: 69px; }
.body { display: flex; height: 69px; }
.g-clip .body { padding-left: 7px; }
.g-slide .body { padding-left: 5px; }
.g-font .body { padding-left: 6px; }
.g-para .body { padding-left: 7px; }
.g-draw .body { padding-left: 9px; }
.g-edit .body { padding-left: 11px; }
.g-save .body { justify-content: center; }
.cap { display: flex; align-items: center; height: 22px; padding: 2px 3px 0; }
.cap span { flex: 1; text-align: center; }
.launch { color: #aaa; margin: 3px 0 0 7px; }
.launch.dark { color: #555; }
.big { flex-direction: column; justify-content: flex-start; width: 46px; padding-top: 5px; }
.g-slide .big { width: 58px; }
.big > svg:first-child { margin-bottom: 2px; }
.big > .cv { margin-top: 3px; }
.big .line { display: flex; align-items: center; gap: 2px; }
.big.w40 { width: 40px; margin-left: 4px; }
.big.w50 { width: 50px; margin: 0 4px 0 3px; }
.g-save .big { width: 56px; }
.off, .off .cv { color: #ababab; }
.small { display: flex; flex-direction: column; align-items: flex-start; }
.g-slide .small { margin-left: 1px; }
.g-para .small { margin-left: 2px; }
.small button { height: 23px; gap: 3px; }
.small .cv { margin-left: -1px; }
.small .cv.far { margin-left: 7px; }
.rows { display: flex; flex-direction: column; gap: 7px; padding-top: 8px; }
.row { display: flex; align-items: center; height: 23px; }
.row .cv { color: #aaa; }
.ic { width: 24px; height: 23px; }
.ic.mid { width: 28px; }
.sep { width: 1px; height: 21px; background: #ccc; margin: 0 4px; }
.combo { display: flex; width: 50px; height: 23px; border: 1px solid #8a8a8a; background: #e5e5e5; margin: 0 2px 0 0; }
.combo.wide { width: 148px; margin-left: 2px; }
.combo input { flex: 1; min-width: 0; border: 0; background: none; padding: 0; }
.combo i { width: 14px; border-left: 1px solid #8a8a8a; background: linear-gradient(#b0b0b0, #b0b0b0) center / 5px 2px no-repeat; }
.glyph { color: #a0a0a0; font-size: 13px; }
.row .big-a { font-size: 15px; }
.serif { font-family: "Liberation Serif", serif; font-weight: 700; font-size: 14px; }
.under, .light-a { font-weight: 600; }
.shadow { font-weight: 700; font-size: 14px; text-shadow: 2px 1px 2px #bbb; }
.strike { font-size: 11px; text-decoration: line-through; }
.hl { display: grid; place-items: center; color: #999; font: 700 10px/12px "Open Sans", sans-serif; }
.hl > * { grid-area: 1 / 1; }
.hl span { place-self: start; }
.gallery { display: flex; width: 137px; height: 62px; margin-top: 3px; border: 1px solid #ccc; background: #fff; }
.gscroll { display: grid; grid-template-rows: 1fr 1fr 1fr; width: 15px; margin-left: auto; border-left: 1px solid #ccc; }
.gscroll button + button { border-top: 1px solid #ccc; }
.gscroll .dis { background: #e3e3e3; }
.abac { display: flex; flex-direction: column; width: 16px; font: 700 10px/10px "Open Sans", sans-serif; color: #555; }
.abac em { font-style: normal; color: #8c4fb5; }
.abac .to { align-self: flex-end; color: #3a78b5; }
.collapse { margin: auto 8px 4px auto; }

/* work area */
.work { flex: 1; display: grid; grid-template-columns: 267px 1fr 271px; }
.thumbs { display: flex; align-items: flex-start; padding: 16px 19px 0 13px; border-right: 1px solid #bcbcbc; }
.num { width: 21px; color: #d2603c; font-size: 15px; line-height: 14px; }
.thumb { flex: 1; aspect-ratio: 213 / 123; background: #fff; border: 3px solid #b7472a; }
.canvas { padding: 50px 37px 0 23px; border-bottom: 1px solid #b5b5b5; margin-bottom: 2px; }
.slide { aspect-ratio: 16 / 9; background: #fff; border: 1px solid #c0c0c0; }
.pane { position: relative; background: #fff; border-left: 1px solid #d0d0d0; border-top: 1px solid #d0d0d0; padding: 6px 5px 0; }
.pane h2 { font-size: 13px; line-height: 18px; padding-left: 5px; }
.pane-tools { display: flex; justify-content: flex-end; align-items: center; height: 38px; padding: 4px 6px 0 0; }
.pane-tools button { width: 36px; height: 24px; }
.help span { width: 16px; height: 16px; border: 1px solid #333; border-radius: 50%; font-weight: 600; line-height: 14px; }
.box { display: grid; grid-template-columns: 1fr 1fr; border: 1px solid #dcdce4; border-left: 0; }
.cell { height: 132px; padding: 16px 8px 0; border-bottom: 1px solid #e6e6ea; }
.cell:nth-child(odd) { border-right: 1px solid #dcdce4; }
.cell.short { height: 103px; }
.box h3 { font-size: 12px; line-height: 16px; padding-left: 8px; color: #5c5c66; }
.icons { display: grid; grid-template-columns: 36px 35px 36px; grid-auto-rows: 24px; row-gap: 4px; margin-top: 5px; place-items: center; width: 107px; }
.icons svg { width: 16px; height: 16px; color: #9a9a9a; }
.icons .red { color: #f5484a; }
.icons .hover { width: 20px; height: 20px; padding: 2px; background: #f5f5f5; }
.s, .s2, .d { fill: none; stroke: currentColor; stroke-width: 1; }
.s2 { stroke-width: 2; }
.d { stroke-dasharray: 1 1; }
.f { fill: currentColor; }
.wide-cell { grid-column: 1 / -1; height: 96px; padding: 17px 8px 0; border-bottom: 1px solid #e6e6ea; }
.opts { display: grid; grid-template-columns: 118px 1fr; grid-auto-rows: 24px; padding-left: 8px; margin-top: 4px; align-items: center; font-size: 11px; color: #8c8c8c; }
.opts label { display: flex; align-items: center; gap: 4px; }
.opts input { appearance: none; width: 16px; height: 16px; margin: 0; border: 1px solid #e8e8e8; border-radius: 50%; }
.opts input[type=radio]:checked { border: 0; background: radial-gradient(circle, #fff 0 3px, transparent 3px), linear-gradient(90deg, #ffa0a4, #ffb6a0); }
.opts input[type=checkbox] { position: relative; border: 0; border-radius: 2px; background: linear-gradient(90deg, #ffa0a4, #ffb6a0); }
.opts input[type=checkbox]::after { content: ""; position: absolute; left: 5px; top: 3px; width: 5px; height: 8px; border: solid #fff; border-width: 0 1px 1px 0; transform: rotate(45deg); }
.wide-cell.last { height: 131px; padding-top: 19px; border: 0; }
.mhead { display: flex; align-items: center; gap: 14px; padding-right: 10px; color: #9a9a9a; }
.mhead h3 { flex: 1; }
.margins { display: grid; grid-template-columns: 12px 90px 12px 90px; gap: 8px; align-items: center; padding: 9px 0 0 8px; }
.margins > svg { fill: none; stroke: #d0d0da; }
.spin { display: flex; align-items: center; height: 26px; border: 1px solid #dcdce4; padding-right: 5px; }
.spin input { flex: 1; min-width: 0; border: 0; padding: 0; background: none; }
.spin svg { fill: #c8c8cc; }
.pill { position: absolute; right: 0; top: 718px; width: 9px; height: 52px; padding: 20px 2px 1px; border: 2px solid #7c7c7c; border-radius: 5px; background: #fff; }
.pill i { display: block; height: 27px; margin: 0 -1px; background: #ff6f1f; border-radius: 0 0 3px 3px; }

/* status bar */
.status { display: flex; align-items: center; height: 23px; padding-left: 7px; background: #f3f3f3; border-top: 1px solid #c4c4c4; border-bottom: 1px solid #d6e2f2; white-space: nowrap; }
.status .proof { margin: 0 17px 0 25px; }
.acc { gap: 3px; margin-left: 16px; }
.status .right { display: flex; align-items: center; align-self: stretch; margin-left: auto; padding-right: 6px; }
.right button { gap: 3px; }
.right .cmt { margin: 0 19px 0 20px; }
.view { width: 40px; align-self: stretch; }
.view.on { background: #c8c8c8; }
.zm { width: 19px; }
.status input { appearance: none; width: 100px; height: 16px; margin: 0; background: linear-gradient(#555, #555) center / 100% 1px no-repeat; }
.status input::-webkit-slider-thumb { appearance: none; width: 5px; height: 11px; background: #555; }
.pct { margin: 0 14px 0 7px; }

/* overlays */
.mark { position: absolute; left: 160px; top: 10px; }
.watermark { position: absolute; right: 93px; top: 820px; }
.wm { fill: #fff; stroke: #fff; stroke-width: 2; stroke-linejoin: round; opacity: .75; filter: drop-shadow(0 0 2px rgba(0, 0, 0, .55)); }
.bai { font: 700 76px "Liberation Sans", sans-serif; }
.jy { font: 900 62px "Noto Sans CJK SC", sans-serif; }
.url { font: 400 40px "Open Sans", sans-serif; stroke-width: 1; }
.du { font: 700 47px "Liberation Sans", sans-serif; fill: #d4d4d4; stroke: #bbb; }
```
